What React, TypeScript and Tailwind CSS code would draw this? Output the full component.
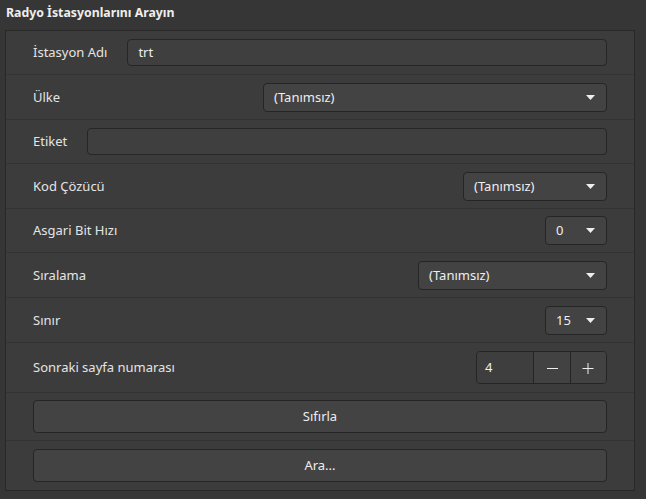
import type { ReactNode } from 'react'

const font = { fontFamily: '"Noto Sans", "DejaVu Sans", sans-serif' }

function Arrow() {
  return (
    <svg width="9" height="5" viewBox="0 0 9 5" className="shrink-0">
      <path d="M0 0 L9 0 L4.5 5 Z" fill="#eeeeee" />
    </svg>
  )
}

function Combo({ value, width }: { value: string; width: string }) {
  return (
    <div
      className={`${width} h-[29px] flex items-center justify-between pl-[10px] pr-[11px] rounded-[4px] border border-[#252525] bg-[#434343] text-[#eeeeee]`}
    >
      <span>{value}</span>
      <Arrow />
    </div>
  )
}

function Row({ h, children }: { h: string; children: ReactNode }) {
  return (
    <div className={`${h} flex items-center gap-[20px] px-[27px] border-b border-[#333333] last:border-b-0`}>
      {children}
    </div>
  )
}

function Label({ children }: { children: ReactNode }) {
  return <span className="text-[#e4e4e4] whitespace-nowrap">{children}</span>
}

export default function App() {
  return (
    <div className="w-[646px] h-[499px] bg-[#363636] text-[13px] leading-none" style={font}>
      <div className="h-[30px] flex items-center pl-[6px] pb-[4px] text-[12.3px] font-bold text-[#eeeeee]">
        Radyo İstasyonlarını Arayın
      </div>

      <div className="ml-[5px] w-[630px] border border-[#282828] bg-[#3c3c3c]">
        <Row h="h-[44px]">
          <Label>İstasyon Adı</Label>
          <div className="flex-1 h-[27px] flex items-center px-[10px] rounded-[4px] border border-[#262626] bg-[#3f3f3f] text-[#eeeeee]">
            trt
          </div>
        </Row>

        <Row h="h-[45px]">
          <Label>Ülke</Label>
          <div className="flex-1" />
          <Combo value="(Tanımsız)" width="w-[344px]" />
        </Row>

        <Row h="h-[44px]">
          <Label>Etiket</Label>
          <div className="flex-1 h-[27px] rounded-[4px] border border-[#262626] bg-[#3f3f3f]" />
        </Row>

        <Row h="h-[45px]">
          <Label>Kod Çözücü</Label>
          <div className="flex-1" />
          <Combo value="(Tanımsız)" width="w-[144px]" />
        </Row>

        <Row h="h-[44px]">
          <Label>Asgari Bit Hızı</Label>
          <div className="flex-1" />
          <Combo value="0" width="w-[62px]" />
        </Row>

        <Row h="h-[45px]">
          <Label>Sıralama</Label>
          <div className="flex-1" />
          <Combo value="(Tanımsız)" width="w-[189px]" />
        </Row>

        <Row h="h-[45px]">
          <Label>Sınır</Label>
          <div className="flex-1" />
          <Combo value="15" width="w-[62px]" />
        </Row>

        <Row h="h-[50px]">
          <Label>Sonraki sayfa numarası</Label>
          <div className="flex-1" />
          <div className="w-[131px] h-[33px] flex rounded-[4px] border border-[#252525] overflow-hidden">
            <div className="w-[57px] flex items-center pl-[8px] bg-[#3e3e3e] text-[#eeeeee] border-r border-[#252525]">
              4
            </div>
            <div className="flex-1 flex items-center justify-center bg-[#424242] border-r border-[#252525]">
              <svg width="12" height="12" viewBox="0 0 12 12">
                <path d="M1 6.5 H12" stroke="#eeeeee" strokeWidth="1" />
              </svg>
            </div>
            <div className="flex-1 flex items-center justify-center bg-[#424242]">
              <svg width="12" height="12" viewBox="0 0 12 12">
                <path d="M0.5 6.5 H11.5 M6 1 V12" stroke="#eeeeee" strokeWidth="1" />
              </svg>
            </div>
          </div>
        </Row>

        <Row h="h-[48px]">
          <button className="w-full h-[33px] rounded-[4px] border border-[#252525] bg-[#434343] text-[#eeeeee]">
            Sıfırla
          </button>
        </Row>

        <Row h="h-[49px]">
          <button className="w-full h-[33px] rounded-[4px] border border-[#252525] bg-[#434343] text-[#eeeeee]">
            Ara...
          </button>
        </Row>
      </div>
    </div>
  )
}
